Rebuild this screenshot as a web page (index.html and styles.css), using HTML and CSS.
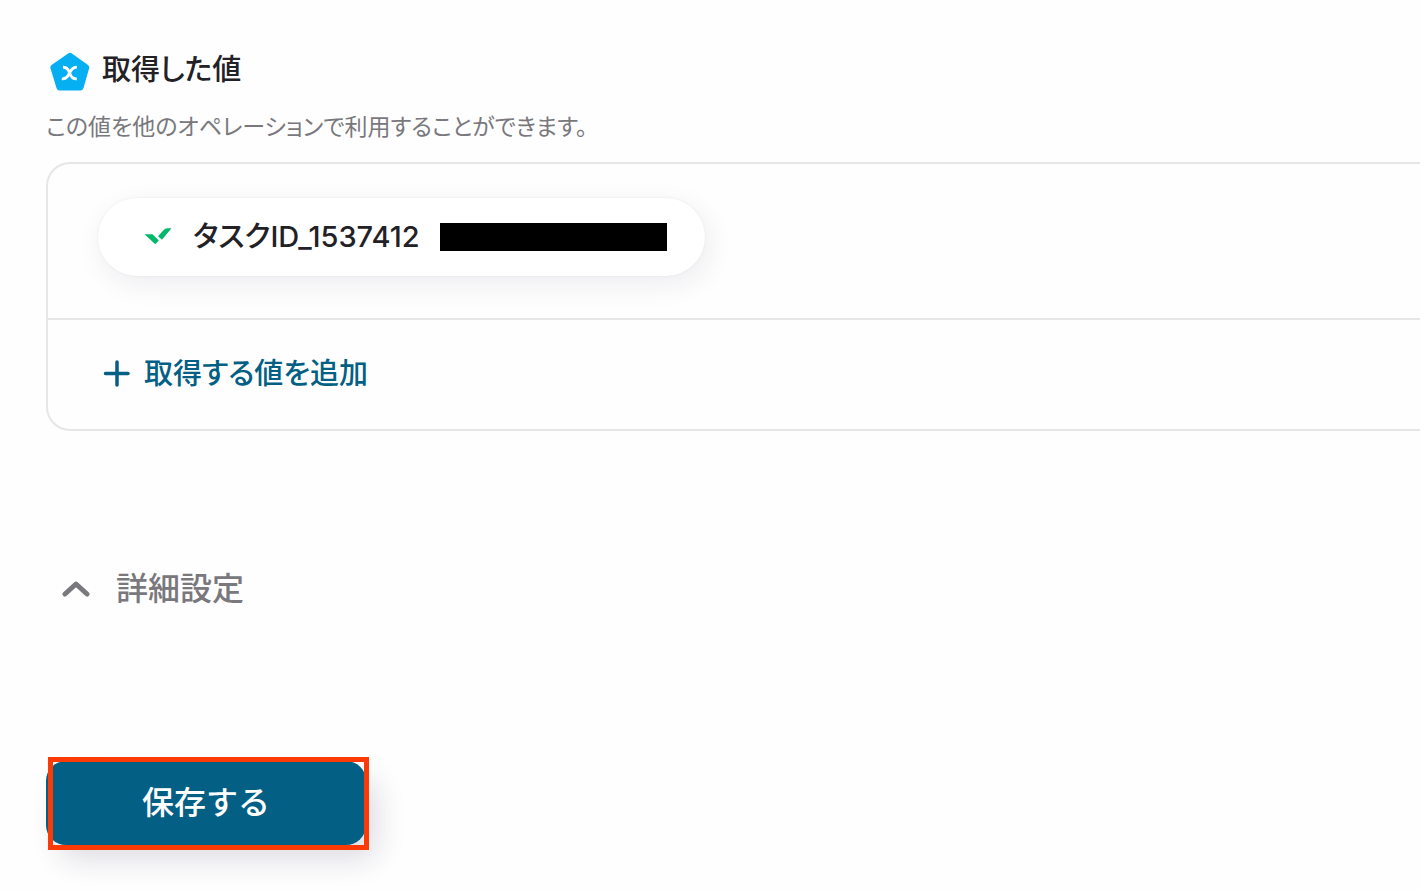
FILE: index.html
```
<!DOCTYPE html>
<html lang="ja">
<head>
<meta charset="utf-8">
<meta name="viewport" content="width=device-width, initial-scale=1">
<title>取得した値</title>
<link rel="stylesheet" href="styles.css">
</head>
<body>
<main class="page">
  <section class="output">
    <h1 class="heading">
      <svg class="logo" viewBox="0 0 48 44" aria-hidden="true">
        <path d="M22.500 5.300Q24 4.200 25.500 5.300L42 17Q43.700 18.300 43.200 20.100L37.500 40Q36.700 42.500 34.500 42.500H13.500Q11.300 42.500 10.500 40L4.400 20.100Q3.800 18.300 5.500 17Z" fill="#06aff2"/>
        <path d="M17 19.300C20.500 18.900 22 20.700 23.500 24.800C25 29.200 26.800 31.200 30.800 30.900M30.800 19.300C27 18.900 25.400 21 23.500 25.200C21.700 29.200 20 31.200 15.800 30.900" fill="none" stroke="#fff" stroke-width="2.800"/>
      </svg>
      <span>取得した値</span>
    </h1>
    <p class="description">この値を他のオペレーションで利用することができます。</p>
    <div class="card">
      <div class="values">
        <div class="chip">
          <svg class="chip-icon" viewBox="0 0 30 30" aria-hidden="true">
            <path d="M1.500 12.300H9.500L15.800 18.600L12.300 22.200Z M15 14.200L20.200 8.500Q22 6.400 24.500 6.300L28.500 6.200L19 17.700Z" fill="#00b869"/>
          </svg>
          <span>タスクID_1537412</span>
          <span class="redacted"></span>
        </div>
      </div>
      <div class="add-row">
        <button class="add" type="button">
          <svg class="plus" viewBox="0 0 28 28" aria-hidden="true"><path d="M3.500 13.500H26M15 2V25" fill="none" stroke="currentColor" stroke-width="3.500" stroke-linecap="round"/></svg>
          取得する値を追加
        </button>
      </div>
    </div>
  </section>
  <button class="advanced" type="button" aria-expanded="false">
    <svg class="chevron" viewBox="0 0 28 20" aria-hidden="true"><path d="M3 15L14 5L25 15" fill="none" stroke="currentColor" stroke-width="5" stroke-linecap="round" stroke-linejoin="round"/></svg>
    詳細設定
  </button>
  <div class="actions">
    <button class="save" type="button">保存する</button>
    <span class="highlight"></span>
  </div>
</main>
</body>
</html>
```
FILE: styles.css
```
* { box-sizing: border-box; }

body {
  margin: 0;
  background: #fefefe;
  color: #222126;
  font-family: Inter, "Noto Sans CJK JP", sans-serif;
}

button {
  border: 0;
  padding: 0;
  background: none;
  font: inherit;
  cursor: pointer;
}

.page {
  padding: 48px 0 40px 46px;
}

.heading,
.description,
.chip,
.add {
  font-feature-settings: "palt";
}

.heading {
  display: flex;
  align-items: center;
  gap: 8px;
  margin: 0;
  font-size: 29px;
  line-height: 44px;
  font-weight: 500;
}

.logo { width: 48px; height: 44px; }

.description {
  margin: 20px 0;
  color: #79787d;
  font-size: 23px;
  line-height: 30px;
}

.card {
  border: 2px solid #e6e5e8;
  border-right: 0;
  border-radius: 24px 0 0 24px;
}

.values {
  display: flex;
  padding: 34px 50px 42px;
  border-bottom: 2px solid #e6e5e8;
}

.chip {
  display: flex;
  align-items: center;
  height: 78px;
  padding: 0 38px 0 45px;
  gap: 20px;
  border-radius: 40px;
  background: #fff;
  box-shadow: 0 0 3px rgba(40, 20, 60, .06), 4px 8px 28px rgba(40, 20, 60, .08);
  font-size: 29px;
  line-height: 40px;
  font-weight: 500;
}

.chip-icon { width: 30px; height: 30px; }

.redacted { width: 227px; height: 28px; background: #000; }

.add-row { padding: 32px 54px 33px; }

.add {
  display: flex;
  align-items: center;
  gap: 14px;
  color: #035f84;
  font-size: 29px;
  line-height: 44px;
  font-weight: 500;
}

.plus { width: 28px; height: 28px; }

.advanced {
  display: flex;
  align-items: center;
  gap: 26px;
  margin: 134px 0 0 16px;
  color: #79787d;
  font-size: 32px;
  line-height: 48px;
  font-weight: 500;
}

.chevron { width: 28px; height: 20px; }

.actions {
  position: relative;
  display: inline-flex;
  margin-top: 148px;
}

.save {
  padding: 18px 96px;
  border-radius: 20px;
  background: #035f84;
  color: #fff;
  font-size: 32px;
  line-height: 48px;
  font-weight: 500;
  box-shadow: 12px 16px 28px rgba(40, 30, 70, .14);
}

.highlight {
  position: absolute;
  inset: -4px -3px -5px 2px;
  border: 5px solid #fc3a05;
  pointer-events: none;
}
```
